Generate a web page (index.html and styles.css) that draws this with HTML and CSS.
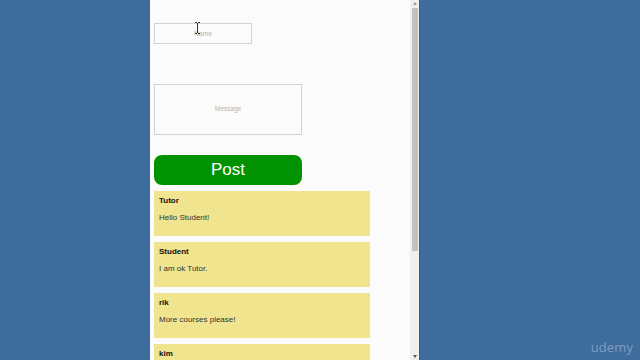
FILE: index.html
```html
<!DOCTYPE html>
<html>
<head>
<meta charset="utf-8">
<link rel="stylesheet" href="styles.css">
</head>
<body>
<div class="stage">
  <div class="side"></div>
  <div class="panel">
    <input class="name-input" type="text" placeholder="Name">
    <textarea class="msg-input" placeholder="Message"></textarea>
    <button class="post-btn">Post</button>
    <div class="cards">
      <div class="card"><div class="who">Tutor</div><div class="text">Hello Student!</div></div>
      <div class="card"><div class="who">Student</div><div class="text">I am ok Tutor.</div></div>
      <div class="card"><div class="who">rik</div><div class="text">More courses please!</div></div>
      <div class="card"><div class="who">kim</div></div>
    </div>
  </div>
  <div class="scrollbar">
    <div class="arrow up"></div>
    <div class="thumb"></div>
    <div class="track"></div>
    <div class="arrow down"></div>
  </div>
  <div class="rest">
    <div class="watermark">udemy</div>
  </div>
</div>
<svg class="cursor" width="7" height="12" viewBox="0 0 7 12">
  <path d="M1 0.5h2M4 0.5h2M3.5 1v10M1 11.5h2M4 11.5h2" stroke="#333" stroke-width="1" fill="none"/>
</svg>
</body>
</html>
```
FILE: styles.css
```css
* { box-sizing: border-box; }
html, body { margin: 0; padding: 0; }
body {
  width: 640px;
  height: 360px;
  overflow: hidden;
  background: #3e6c9c;
  font-family: "Liberation Sans", Arial, sans-serif;
  position: relative;
}
.stage {
  display: flex;
  height: 360px;
}
.side { width: 150px; flex-shrink: 0; }
.panel {
  width: 260px;
  flex-shrink: 0;
  height: 360px;
  background: #fbfbfb;
  padding: 23px 0 0 4px;
  display: flex;
  flex-direction: column;
  align-items: flex-start;
  overflow: hidden;
}
.panel > * { flex-shrink: 0; }
.name-input {
  width: 98px;
  height: 21px;
  border: 1px solid #d2d2d2;
  background: #fbfbfb;
  font-family: "Liberation Sans", Arial, sans-serif;
  font-size: 6.8px;
  text-align: center;
  padding: 0;
  margin: 0;
  outline: none;
}
.msg-input {
  margin: 40px 0 0 0;
  width: 148px;
  height: 51px;
  border: 1px solid #d2d2d2;
  background: #fbfbfb;
  font-family: "Liberation Sans", Arial, sans-serif;
  font-size: 6.5px;
  line-height: 8px;
  text-align: center;
  padding: 20px 0 0 0;
  resize: none;
  outline: none;
  display: block;
  overflow: hidden;
}
.name-input::placeholder, .msg-input::placeholder { color: #b4b4b4; }
.post-btn {
  margin-top: 20px;
  width: 148px;
  height: 30px;
  border: none;
  border-radius: 8px;
  background: #009200;
  color: #fff;
  font-family: "Liberation Sans", Arial, sans-serif;
  font-size: 17px;
  line-height: 30px;
  padding: 0;
}
.cards {
  margin-top: 6px;
  display: flex;
  flex-direction: column;
  gap: 6px;
}
.card {
  width: 216px;
  height: 45px;
  flex-shrink: 0;
  background: #f0e48e;
  padding: 5px 5px 0 5px;
  color: #222;
}
.who {
  font-size: 8px;
  font-weight: bold;
  line-height: 10px;
  color: #111;
}
.text {
  margin-top: 7px;
  font-size: 8px;
  line-height: 10px;
  color: #333;
}
.scrollbar {
  width: 9px;
  flex-shrink: 0;
  height: 360px;
  background: #efefef;
  display: flex;
  flex-direction: column;
  align-items: center;
  padding: 2px 0;
}
.arrow {
  width: 0;
  height: 0;
  border-left: 2px solid transparent;
  border-right: 2px solid transparent;
}
.arrow.up { border-bottom: 3px solid #999; }
.arrow.down { border-top: 3px solid #555; }
.thumb {
  margin-top: 3px;
  width: 6px;
  height: 243px;
  background: #c1c1c1;
}
.track { flex: 1; }
.rest {
  flex: 1;
  border-left: 1px solid #35608c;
  position: relative;
}
.watermark {
  position: absolute;
  right: 7px;
  bottom: 4px;
  font-family: "Open Sans", "Liberation Sans", sans-serif;
  font-size: 13px;
  color: #7f9dc2;
  letter-spacing: 0.1px;
}
.cursor {
  position: absolute;
  left: 194px;
  top: 22px;
}
```
